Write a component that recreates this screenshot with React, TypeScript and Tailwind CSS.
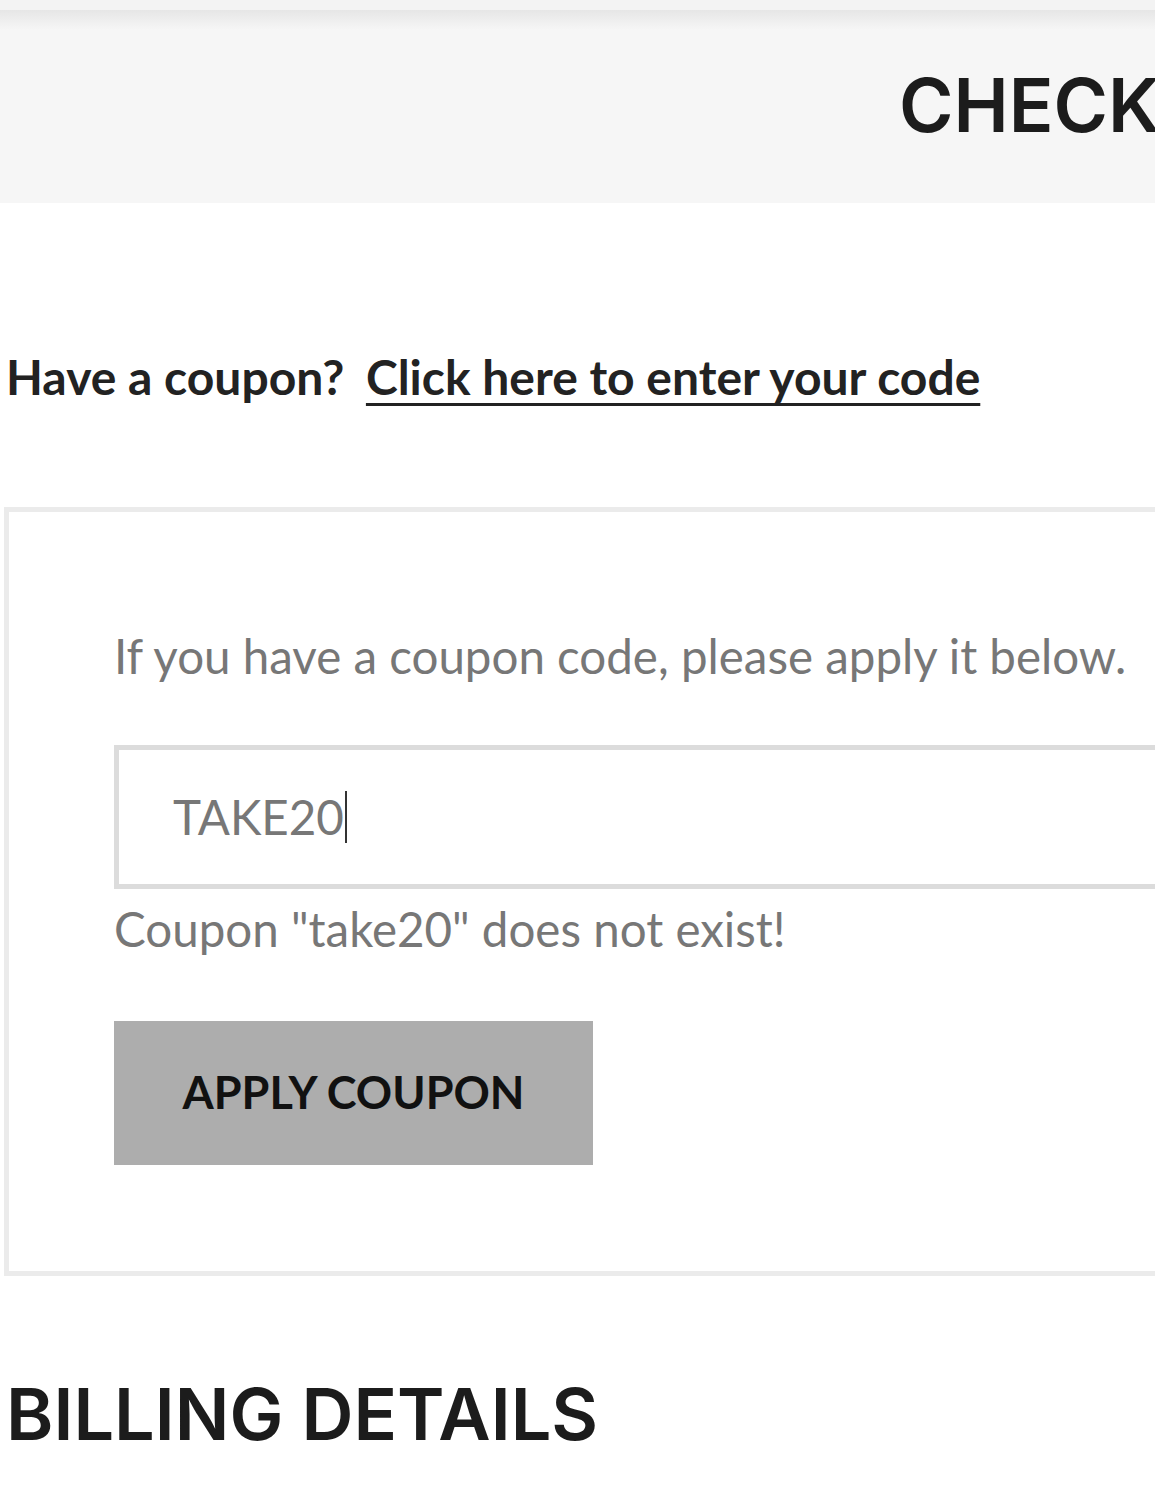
const body = { fontFamily: 'Lato, "Liberation Sans", sans-serif' };
const heading = { fontFamily: 'Inter, "DejaVu Sans", sans-serif' };

export default function App() {
  return (
    <div className="min-h-[1500px] w-[1155px] overflow-hidden bg-white" style={body}>
      {/* top strip + header band */}
      <div className="h-[10px] bg-[#f3f3f3]" />
      <div className="h-[20px] bg-gradient-to-b from-[#e6e6e6] to-[#f6f6f6]" />
      <div className="flex h-[173px] items-center bg-[#f6f6f6] pb-[24px] pl-[899px]">
        <h1 className="whitespace-nowrap text-[74px] font-semibold leading-none text-[#1c1c1c]" style={heading}>
          CHECKOUT
        </h1>
      </div>

      <div className="pl-[6px]">
        <p className="mt-[146px] text-[48px] font-bold leading-[56px] text-[#222]">
          Have a coupon?{' '}
          <a href="#" className="ml-[10px] underline decoration-[3px] underline-offset-[8px]">
            Click here to enter your code
          </a>
        </p>
      </div>

      <div className="ml-[4px] mt-[102px] border-[5px] border-r-0 border-[#ebebeb] pb-[106px] pl-[105px] pt-[116px]">
        <p className="text-[47.5px] leading-[55px] text-[#777]">If you have a coupon code, please apply it below.</p>

        <div className="mt-[62px] flex h-[144px] items-center border-[5px] border-r-0 border-[#dcdcdc] pl-[54px]">
          <span className="text-[47.5px] text-[#777]">TAKE20</span>
          <span className="ml-[1px] h-[52px] w-[2px] bg-[#333]" />
        </div>

        <p className="mt-[12px] text-[47.5px] leading-[55px] text-[#777]">Coupon "take20" does not exist!</p>

        <button className="mt-[65px] flex h-[144px] w-[479px] items-center justify-center bg-[#adadad] text-[45px] font-bold text-[#111]">
          APPLY COUPON
        </button>
      </div>

      <h2 className="ml-[6px] mt-[102px] text-[72px] font-semibold leading-none text-[#1c1c1c]" style={heading}>
        BILLING DETAILS
      </h2>
    </div>
  );
}
